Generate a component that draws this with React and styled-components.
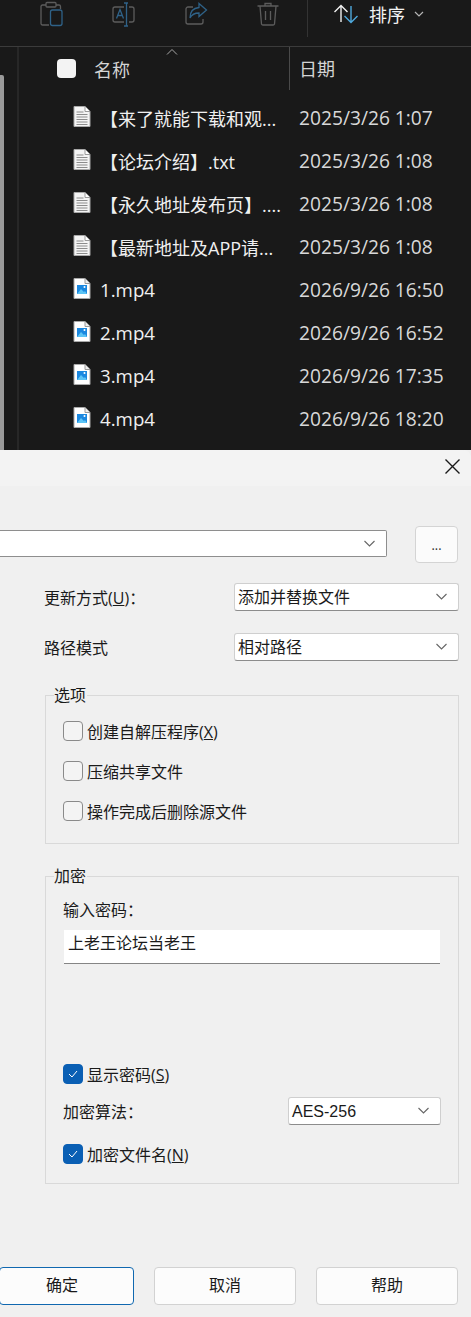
import React from "react"
import styled, { createGlobalStyle } from "styled-components"

const GlobalStyle = createGlobalStyle`
  html, body {
    margin: 0;
    padding: 0;
    background: #f0f0f0;
  }
  body {
    font-family: "Open Sans", "Noto Sans CJK SC", sans-serif;
  }
  * {
    box-sizing: border-box;
  }
`

const Page = styled.div`
  width: 471px;
  height: 1317px;
  overflow: hidden;
`

const Explorer = styled.div`
  height: 450px;
  background: #191919;
  overflow: hidden;
`

const Toolbar = styled.div`
  height: 47px;
  display: flex;
  align-items: flex-start;
  border-bottom: 1px solid #3b3b3b;
  padding-left: 40px;
`

const ToolIcon = styled.svg`
  width: 24px;
  height: 28px;
  margin-right: 48px;
  fill: none;
  stroke-width: 1.3;
  flex: none;
`

const ToolDivider = styled.div`
  width: 1px;
  height: 37px;
  background: #333;
  margin-left: -21px;
`

const SortButton = styled.div`
  display: flex;
  align-items: center;
  height: 28px;
  margin-left: 25px;
  color: #f2f2f2;
  font-size: 18px;
  font-family: "Noto Sans CJK SC", sans-serif;
`

const SortIcon = styled.svg`
  width: 26px;
  height: 20px;
  margin-right: 10px;
  fill: none;
  stroke-width: 1.4;
`

const SortChevron = styled.svg`
  width: 10px;
  height: 6px;
  margin-left: 9px;
  fill: none;
  stroke: #b5b5b5;
  stroke-width: 1.2;
`

const ExplorerBody = styled.div`
  display: flex;
  height: 403px;
`

const NavPane = styled.div`
  width: 19px;
  flex: none;
  border-right: 2px solid #272727;
  padding-top: 28px;
`

const ScrollThumb = styled.div`
  width: 4px;
  height: 100%;
  background: #9a9a9a;
  border-radius: 0 2px 0 0;
`

const FileList = styled.div`
  flex: 1;
  min-width: 0;
`

const HeaderRow = styled.div`
  position: relative;
  height: 43px;
  margin-bottom: 5px;
  display: flex;
  align-items: center;
  color: #d4d4d4;
  font-size: 18px;
  font-family: "Noto Sans CJK SC", sans-serif;
`

const SortCaret = styled.svg`
  position: absolute;
  left: 147px;
  top: 2px;
  width: 12px;
  height: 6px;
  fill: none;
  stroke: #a8a8a8;
  stroke-width: 1;
`

const HeaderCheck = styled.div`
  width: 19px;
  height: 19px;
  margin-left: 38px;
  background: #f3f3f3;
  border-radius: 4px;
  flex: none;
`

const HeaderName = styled.div`
  width: 213px;
  padding-left: 18px;
  flex: none;
`

const HeaderDate = styled.div`
  height: 43px;
  line-height: 43px;
  border-left: 1px solid #4a4a4a;
  padding-left: 9px;
  flex: 1;
`

const FileRow = styled.div`
  height: 43px;
  display: flex;
  align-items: center;
  color: #f0f0f0;
  font-size: 18px;
`

const FileIconWrap = styled.svg`
  width: 18px;
  height: 21px;
  margin-left: 54px;
  flex: none;
`

const FileName = styled.div`
  width: 208px;
  padding: 2px 0 0 9px;
  white-space: nowrap;
  overflow: hidden;
  flex: none;
  font-size: ${(p) => (p.$video ? 18.7 : 18)}px;
`

const FileDate = styled.div`
  color: #d8d8d8;
  font-size: 19.2px;
  padding-top: 2px;
  white-space: nowrap;
`

const Dialog = styled.div`
  height: 867px;
  background: #f0f0f0;
  color: #1a1a1a;
  font-size: 16px;
  font-family: "Noto Sans CJK SC", sans-serif;
  padding-right: 12px;
`

const TitleBar = styled.div`
  height: 36px;
  margin-right: -12px;
  background: #f3f3f3;
  border-radius: 0 8px 0 0;
  display: flex;
  justify-content: flex-end;
  padding: 9px 11px 0 0;
`

const CloseIcon = styled.svg`
  width: 15px;
  height: 15px;
  stroke: #1a1a1a;
  stroke-width: 1.4;
`

const PathRow = styled.div`
  display: flex;
  align-items: flex-start;
  justify-content: space-between;
  height: 37px;
  margin: 40px 1px 0 0;
`

const DropBox = styled.div`
  display: flex;
  align-items: center;
  justify-content: space-between;
  height: 28px;
  width: ${(p) => p.$width}px;
  background: #fff;
  border: 1px solid #cfcfcf;
  border-bottom-color: #8c8c8c;
  border-radius: 3px;
  padding: 0 11px 2px 3px;
  flex: none;
`

const PathBox = styled(DropBox)`
  width: 387px;
  height: 27px;
  margin-top: 4px;
  border: 1px solid #8e8e8e;
  border-left: none;
  border-radius: 0 2px 2px 0;
  padding: 0 11px 0 3px;
`

const Chevron = styled.svg`
  width: 11px;
  height: 7px;
  fill: none;
  stroke: #666;
  stroke-width: 1.1;
  flex: none;
`

const BrowseButton = styled.div`
  width: 43px;
  height: 37px;
  background: #fbfbfb;
  border: 1px solid #d4d4d4;
  border-radius: 4px;
  text-align: center;
  line-height: 36px;
  font-size: 12px;
  color: #333;
`

const FormRow = styled.div`
  display: flex;
  align-items: center;
  justify-content: space-between;
  height: 28px;
  margin-top: ${(p) => p.$top}px;
  margin-left: 44px;
`

const Group = styled.div`
  margin-left: 45px;
  margin-top: ${(p) => p.$top}px;
  height: ${(p) => p.$height}px;
  border: 1px solid #d9d9d9;
  padding-left: 17px;
`

const Legend = styled.div`
  width: fit-content;
  height: 20px;
  line-height: 20px;
  margin: -12px 0 0 -9px;
  padding: 0 1px 0 0;
  background: #f0f0f0;
`

const CheckRow = styled.div`
  display: flex;
  align-items: center;
  height: 20px;
  margin-top: ${(p) => p.$top}px;
`

const CheckBox = styled.div`
  width: 20px;
  height: 20px;
  margin-right: 4px;
  border-radius: 4px;
  flex: none;
  border: 1px solid ${(p) => (p.$checked ? "#0a5fb4" : "#8a8a8a")};
  background: ${(p) => (p.$checked ? "#0a5fb4" : "#f4f4f4")};
  display: flex;
  align-items: center;
  justify-content: center;
`

const CheckMark = styled.svg`
  width: 10px;
  height: 8px;
  fill: none;
  stroke: #fff;
  stroke-width: 1;
`

const Mnemonic = styled.span`
  font-family: "Open Sans", sans-serif;
`

const Under = styled.span`
  text-decoration: underline;
`

const FieldLabel = styled.div`
  height: 20px;
  line-height: 20px;
  margin-top: 14px;
`

const PasswordInput = styled.div`
  width: 376px;
  height: 34px;
  margin-top: 11px;
  margin-left: 1px;
  background: #fff;
  border-bottom: 1px solid #858585;
  padding-left: 4px;
  line-height: 24px;
`

const AlgoRow = styled.div`
  display: flex;
  align-items: center;
  justify-content: space-between;
  width: 378px;
  height: 28px;
  margin-top: 13px;
`

const AlgoValue = styled.span`
  font-family: "Liberation Sans", sans-serif;
  font-size: 16px;
  padding-top: 3px;
`

const ButtonRow = styled.div`
  display: flex;
  justify-content: space-between;
  margin: 83px 1px 0 -1px;
`

const DialogButton = styled.div`
  width: ${(p) => p.$width}px;
  height: 38px;
  line-height: 33px;
  text-align: center;
  background: #fcfcfc;
  border: 1px solid ${(p) => (p.$primary ? "#1068b0" : "#d2d2d2")};
  border-radius: 4px;
  padding-right: ${(p) => (p.$primary ? 9 : 0)}px;
`

const DocIcon = () => (
  <FileIconWrap viewBox="0 0 18 21">
    <path d="M1 0.5h11l5 5v15H1z" fill="#f4f4f4" stroke="#a8a8a8" />
    <path d="M12 0.5v5h5" fill="#fff" stroke="#9a9a9a" />
    <path
      d="M3.5 6h7M3.5 8.5h11M3.5 11h11M3.5 13.5h11M3.5 16h11M3.5 18.5h11"
      stroke="#8c8c8c"
      strokeWidth="1"
    />
  </FileIconWrap>
)

const VideoIcon = () => (
  <FileIconWrap viewBox="0 0 18 21">
    <path d="M1 0.5h11l5 5v15H1z" fill="#fff" stroke="#a8a8a8" />
    <path d="M12 0.5v5h5" fill="#eee" stroke="#9a9a9a" />
    <rect x="4" y="7" width="10" height="9" fill="#1b88e0" />
    <path d="M4 16l4-5 3 3 1-1 2 3z" fill="#5cc4f5" />
    <circle cx="11.5" cy="9" r="1" fill="#fff" />
  </FileIconWrap>
)

const Arrow = () => (
  <Chevron viewBox="0 0 11 7">
    <path d="M0.5 1l5 5 5-5" />
  </Chevron>
)

const Tick = () => (
  <CheckMark viewBox="0 0 10 8">
    <path d="M1 4l3 3 5-6" />
  </CheckMark>
)

const files = [
  { name: "【来了就能下载和观...", date: "2025/3/26 1:07", type: "doc" },
  { name: "【论坛介绍】.txt", date: "2025/3/26 1:08", type: "doc" },
  { name: "【永久地址发布页】....", date: "2025/3/26 1:08", type: "doc" },
  { name: "【最新地址及APP请...", date: "2025/3/26 1:08", type: "doc" },
  { name: "1.mp4", date: "2026/9/26 16:50", type: "video" },
  { name: "2.mp4", date: "2026/9/26 16:52", type: "video" },
  { name: "3.mp4", date: "2026/9/26 17:35", type: "video" },
  { name: "4.mp4", date: "2026/9/26 18:20", type: "video" },
]

export default function App() {
  return (
    <Page>
      <GlobalStyle />
      <Explorer>
        <Toolbar>
          <ToolIcon viewBox="0 0 24 28">
            <path d="M6 5H2.5A1.5 1.5 0 0 0 1 6.5v17A1.5 1.5 0 0 0 2.5 25H9" stroke="#5c5c5c" />
            <path d="M16 5h3a1.5 1.5 0 0 1 1.5 1.5V9" stroke="#5c5c5c" />
            <rect x="6" y="2.5" width="10" height="4.5" rx="1" stroke="#5c5c5c" />
            <rect x="10.5" y="10" width="11.5" height="15.5" rx="2" stroke="#2f6288" />
          </ToolIcon>
          <ToolIcon viewBox="0 0 24 28">
            <path d="M12 7H3a2 2 0 0 0-2 2v11a2 2 0 0 0 2 2h9" stroke="#5c5c5c" />
            <path d="M17 7h3a2 2 0 0 1 2 2v11a2 2 0 0 1-2 2h-3" stroke="#5c5c5c" />
            <path d="M12 3h4M12 26h4M14.5 3v23" stroke="#2f6288" />
            <path d="M4.5 18.5l3.5-9 3.5 9M5.8 15.5h4.5" stroke="#2f6288" />
          </ToolIcon>
          <ToolIcon viewBox="0 0 24 28">
            <path d="M9 7H4a2 2 0 0 0-2 2v13a2 2 0 0 0 2 2h13a2 2 0 0 0 2-2v-3" stroke="#5c5c5c" />
            <path d="M15 3.5l7.5 6.5-7.5 6.5V13c-4 0-7 1-9 5 0-6 3-10 9-10.500z" stroke="#2f6288" />
          </ToolIcon>
          <ToolIcon viewBox="0 0 24 28">
            <path d="M1.500 6h21M9 6V3.500h6V6M4 6l1.500 18a1.500 1.500 0 0 0 1.500 1h10a1.500 1.500 0 0 0 1.500-1L20 6M9.500 11v9M14.500 11v9" stroke="#5c5c5c" />
          </ToolIcon>
          <ToolDivider />
          <SortButton>
            <SortIcon viewBox="0 0 26 20">
              <path d="M8 18V2M1.500 8L8 1.500 14.500 8" stroke="#f0f0f0" />
              <path d="M18 2v16M11.500 12l6.500 6.500 6.500-6.500" stroke="#4ea8dc" />
            </SortIcon>
            排序
            <SortChevron viewBox="0 0 10 6">
              <path d="M1 1l4 4 4-4" />
            </SortChevron>
          </SortButton>
        </Toolbar>
        <ExplorerBody>
          <NavPane>
            <ScrollThumb />
          </NavPane>
          <FileList>
            <HeaderRow>
              <SortCaret viewBox="0 0 12 6">
                <path d="M1 5.500l5-5 5 5" />
              </SortCaret>
              <HeaderCheck />
              <HeaderName>名称</HeaderName>
              <HeaderDate>日期</HeaderDate>
            </HeaderRow>
            {files.map((file) => (
              <FileRow key={file.name}>
                {file.type === "doc" ? <DocIcon /> : <VideoIcon />}
                <FileName $video={file.type === "video"}>{file.name}</FileName>
                <FileDate>{file.date}</FileDate>
              </FileRow>
            ))}
          </FileList>
        </ExplorerBody>
      </Explorer>
      <Dialog>
        <TitleBar>
          <CloseIcon viewBox="0 0 15 15">
            <path d="M0.500 0.500l14 14M14.500 0.500l-14 14" />
          </CloseIcon>
        </TitleBar>
        <PathRow>
          <PathBox>
            <span />
            <Arrow />
          </PathBox>
          <BrowseButton>...</BrowseButton>
        </PathRow>
        <FormRow $top={20}>
          <span>
            更新方式<Mnemonic>(<Under>U</Under>)</Mnemonic>：
          </span>
          <DropBox $width={225}>
            添加并替换文件
            <Arrow />
          </DropBox>
        </FormRow>
        <FormRow $top={22}>
          <span>路径模式</span>
          <DropBox $width={225}>
            相对路径
            <Arrow />
          </DropBox>
        </FormRow>
        <Group $top={34} $height={149}>
          <Legend>选项</Legend>
          <CheckRow $top={17}>
            <CheckBox />
            <span>
              创建自解压程序<Mnemonic>(<Under>X</Under>)</Mnemonic>
            </span>
          </CheckRow>
          <CheckRow $top={20}>
            <CheckBox />
            <span>压缩共享文件</span>
          </CheckRow>
          <CheckRow $top={20}>
            <CheckBox />
            <span>操作完成后删除源文件</span>
          </CheckRow>
        </Group>
        <Group $top={32} $height={308}>
          <Legend>加密</Legend>
          <FieldLabel>输入密码：</FieldLabel>
          <PasswordInput>上老王论坛当老王</PasswordInput>
          <CheckRow $top={100}>
            <CheckBox $checked>
              <Tick />
            </CheckBox>
            <span>
              显示密码<Mnemonic>(<Under>S</Under>)</Mnemonic>
            </span>
          </CheckRow>
          <AlgoRow>
            <span>加密算法：</span>
            <DropBox $width={153}>
              <AlgoValue>AES-256</AlgoValue>
              <Arrow />
            </DropBox>
          </AlgoRow>
          <CheckRow $top={19}>
            <CheckBox $checked>
              <Tick />
            </CheckBox>
            <span>
              加密文件名<Mnemonic>(<Under>N</Under>)</Mnemonic>
            </span>
          </CheckRow>
        </Group>
        <ButtonRow>
          <DialogButton $primary $width={135}>确定</DialogButton>
          <DialogButton $width={142}>取消</DialogButton>
          <DialogButton $width={142}>帮助</DialogButton>
        </ButtonRow>
      </Dialog>
    </Page>
  )
}
